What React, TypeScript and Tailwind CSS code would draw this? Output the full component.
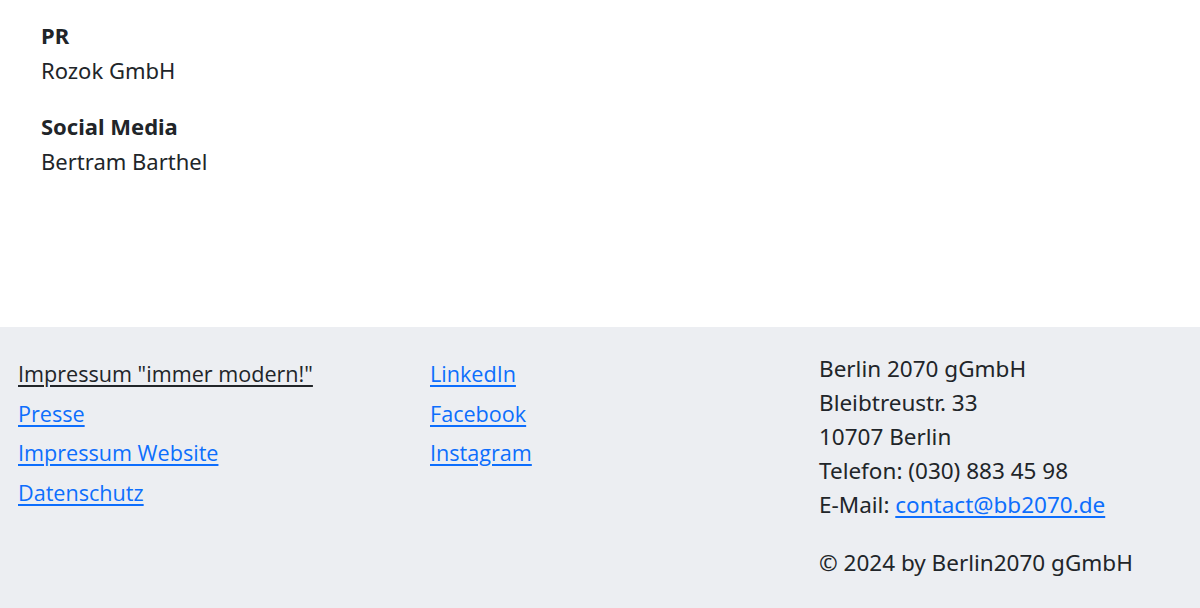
export default function App() {
  return (
    <div className="w-[1200px] h-[608px] flex flex-col bg-white text-[#212529] font-['Noto_Sans',sans-serif]">
      <div className="h-[327px] pl-[41px] pt-[18px] text-[22px] leading-[35px]">
        <div>
          <p className="font-bold">PR</p>
          <p>Rozok GmbH</p>
        </div>
        <div className="mt-[21px]">
          <p className="font-bold">Social Media</p>
          <p>Bertram Barthel</p>
        </div>
      </div>

      <footer className="flex-1 bg-[#eceef2] grid grid-cols-[412px_389px_1fr] pl-[18px] pt-[25px]">
        <ul className="font-['Open_Sans',sans-serif] text-[21.6px] leading-[39.5px] pt-[2px]">
          <li><a href="#" className="text-[#212529] underline underline-offset-[3px]">Impressum "immer modern!"</a></li>
          <li><a href="#" className="text-[#0d6efd] underline underline-offset-[3px]">Presse</a></li>
          <li><a href="#" className="text-[#0d6efd] underline underline-offset-[3px]">Impressum Website</a></li>
          <li><a href="#" className="text-[#0d6efd] underline underline-offset-[3px]">Datenschutz</a></li>
        </ul>
        <ul className="font-['Open_Sans',sans-serif] text-[21.6px] leading-[39.5px] pt-[2px]">
          <li><a href="#" className="text-[#0d6efd] underline underline-offset-[3px]">LinkedIn</a></li>
          <li><a href="#" className="text-[#0d6efd] underline underline-offset-[3px]">Facebook</a></li>
          <li><a href="#" className="text-[#0d6efd] underline underline-offset-[3px]">Instagram</a></li>
        </ul>
        <div className="text-[22.5px] leading-[34px]">
          <p>Berlin 2070 gGmbH</p>
          <p>Bleibtreustr. 33</p>
          <p>10707 Berlin</p>
          <p>Telefon: (030) 883 45 98</p>
          <p>E-Mail: <a href="#" className="text-[#0d6efd] underline underline-offset-[3px]">contact@bb2070.de</a></p>
          <p className="mt-[24px]">© 2024 by Berlin2070 gGmbH</p>
        </div>
      </footer>
    </div>
  );
}
